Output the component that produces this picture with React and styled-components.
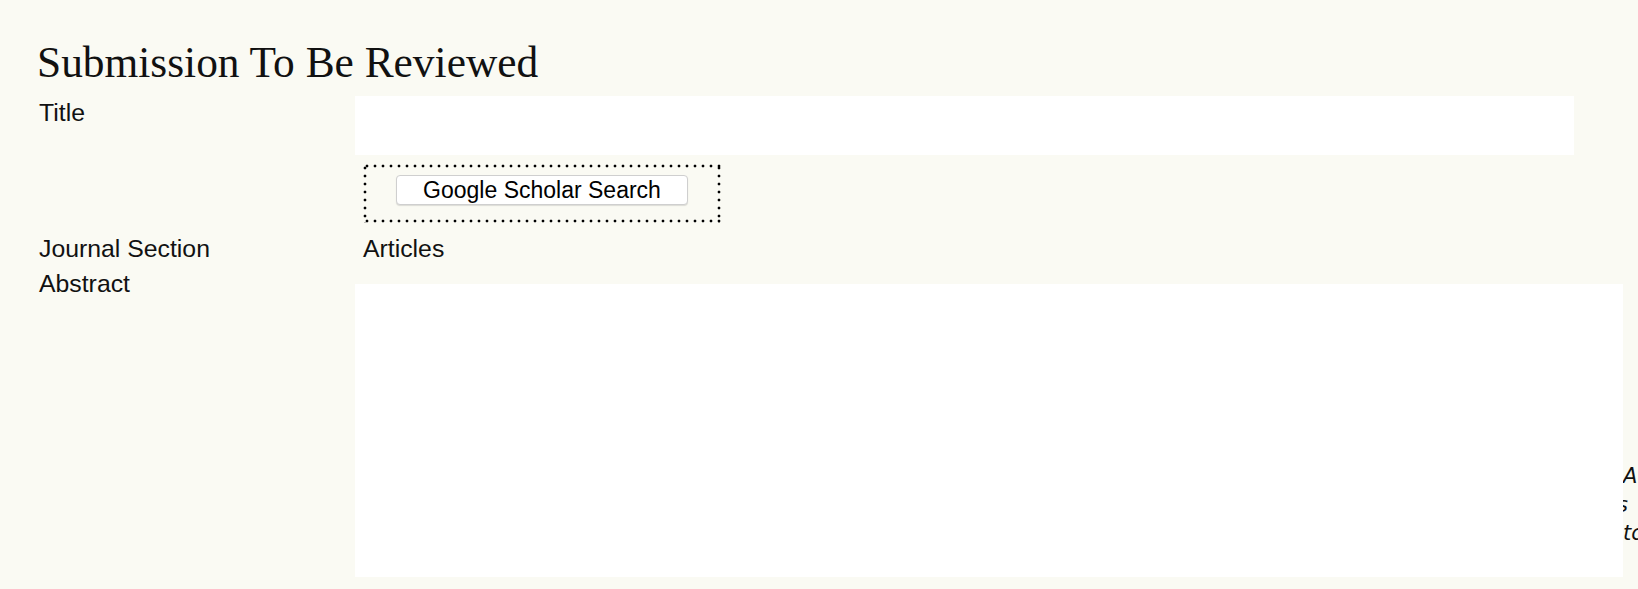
import React from 'react';
import styled, { createGlobalStyle } from 'styled-components';

const Global = createGlobalStyle`
  html, body {
    margin: 0;
    padding: 0;
    background: #fafaf3;
  }
  body {
    font-family: "Liberation Sans", Arial, sans-serif;
    color: #111;
    overflow: hidden;
  }
`

const Page = styled.div`
  position: relative;
  width: 1638px;
  height: 589px;
  padding: 37px 0 0 39px;
  box-sizing: border-box;
  overflow: hidden;
`

const Heading = styled.h3`
  margin: 0 0 9px -2px;
  font-family: "Liberation Serif", Georgia, serif;
  font-weight: normal;
  font-size: 43.4px;
  line-height: 50px;
  color: #111;
`

const Table = styled.div`
  display: grid;
  grid-template-columns: 316px 1fr;
`

const Label = styled.div`
  font-size: 24.8px;
  line-height: 30px;
  padding-top: ${p => p.top || 2}px;
  color: #111;
`

const Value = styled.div`
  padding-top: ${p => p.top || 0}px;
  font-size: 24.8px;
  line-height: 30px;
`

const Field = styled.div`
  position: relative;
  z-index: 1;
  background: #fff;
  width: ${p => p.w}px;
  height: ${p => p.h}px;
`

const Text = styled.div`
  padding: 2px 0 0 8px;
  color: #111;
`

const Dotted = styled.div`
  margin: 9px 0 0 8px;
  width: 358px;
  height: 59px;
  box-sizing: border-box;
  display: flex;
  align-items: center;
  justify-content: center;
  padding-bottom: 8px;
  background:
    radial-gradient(circle, #000 1.2px, transparent 1.7px) 0 0 / 8px 4px repeat-x,
    radial-gradient(circle, #000 1.2px, transparent 1.7px) 0 100% / 8px 4px repeat-x,
    radial-gradient(circle, #000 1.2px, transparent 1.7px) 0 0 / 4px 8px repeat-y,
    radial-gradient(circle, #000 1.2px, transparent 1.7px) 100% 0 / 4px 8px repeat-y;
`

const Button = styled.button`
  width: 292px;
  height: 30px;
  background: #fff;
  border: 1px solid #cfcfcf;
  border-radius: 4px;
  box-shadow: 0 1px 1px rgba(0, 0, 0, 0.12);
  font-family: "Liberation Sans", Arial, sans-serif;
  font-size: 23px;
  line-height: 26px;
  color: #000;
  padding: 0;
`

// italic text of a neighbouring column, mostly hidden behind the abstract box
const Spill = styled.div`
  position: absolute;
  left: 1623px;
  top: 462px;
  z-index: 0;
  font-family: "DejaVu Sans", "Liberation Sans", sans-serif;
  font-style: italic;
  font-size: 21px;
  line-height: 28.5px;
  color: #111;
  white-space: nowrap;
`

const SpillLine = styled.div`
  text-indent: ${p => p.shift || 0}px;
`

export default function App() {
  return (
    <Page>
      <Global />
      <Heading>Submission To Be Reviewed</Heading>
      <Table>
        <Label>Title</Label>
        <Value>
          <Field w={1219} h={59} />
        </Value>

        <div />
        <Value>
          <Dotted>
            <Button>Google Scholar Search</Button>
          </Dotted>
        </Value>

        <Label top={11}>Journal Section</Label>
        <Value top={9}>
          <Text>Articles</Text>
        </Value>

        <Label top={5}>Abstract</Label>
        <Value top={20}>
          <Field w={1268} h={293} />
        </Value>
      </Table>
      <Spill>
        <SpillLine>A</SpillLine>
        <SpillLine shift={-6}>s</SpillLine>
        <SpillLine>to</SpillLine>
      </Spill>
    </Page>
  );
}
